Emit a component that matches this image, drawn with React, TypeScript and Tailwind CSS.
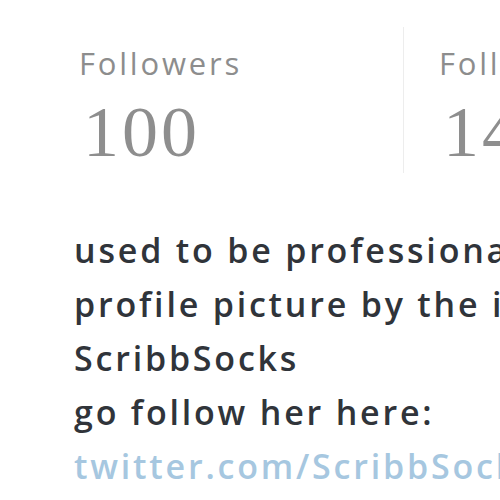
const Stat = ({ label, value }: { label: string; value: string }) => (
  <div className="flex flex-col pt-[21px]">
    <span className="text-[31px] leading-none tracking-[2.8px] text-[#8d8d8d] font-['Open_Sans',sans-serif]">
      {label}
    </span>
    <span className="ml-[4px] mt-[17px] text-[72px] leading-none tracking-[3px] text-[#8e8e8e] font-['Liberation_Serif',serif]">
      {value}
    </span>
  </div>
);

export default function App() {
  return (
    <div className="h-[500px] w-[500px] overflow-hidden bg-white">
      <div className="flex w-[900px] items-start pt-[27px]">
        <div className="w-[403px] pl-[79px]">
          <Stat label="Followers" value="100" />
        </div>
        <div className="h-[146px] w-px bg-[#ededed]" />
        <div className="pl-[35px]">
          <Stat label="Following" value="146" />
        </div>
      </div>
      <div className="mt-[50px] w-[900px] pl-[74px] text-[34px] leading-[54px] tracking-[2.8px] font-semibold text-[#30343a] font-['Open_Sans',sans-serif]">
        <p className="whitespace-nowrap">used to be professional artist</p>
        <p className="whitespace-nowrap">profile picture by the incredible</p>
        <p>ScribbSocks</p>
        <p>go follow her here:</p>
        <p className="text-[#a6c7e0]">twitter.com/ScribbSocks</p>
      </div>
    </div>
  );
}
